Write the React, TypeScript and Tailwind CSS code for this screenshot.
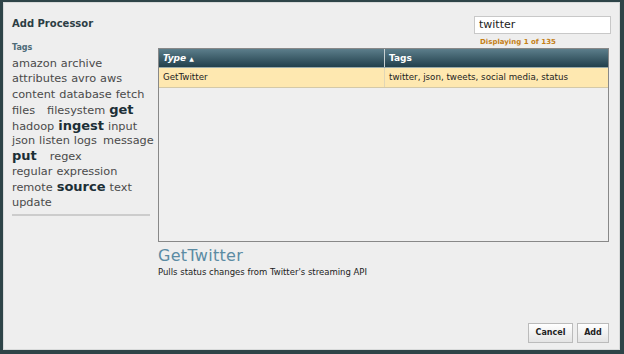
import React from 'react';

type Tag = { label: string; big?: boolean; ml?: string };

const tagLines: Tag[][] = [
    [{ label: 'amazon' }, { label: 'archive' }],
    [{ label: 'attributes' }, { label: 'avro' }, { label: 'aws' }],
    [{ label: 'content' }, { label: 'database' }, { label: 'fetch' }],
    [{ label: 'files' }, { label: 'filesystem', ml: 'ml-[8px]' }, { label: 'get', big: true }],
    [{ label: 'hadoop' }, { label: 'ingest', big: true }, { label: 'input' }],
    [{ label: 'json' }, { label: 'listen' }, { label: 'logs' }, { label: 'message', ml: 'ml-[2px]' }],
    [{ label: 'put', big: true }, { label: 'regex', ml: 'ml-[9px]' }],
    [{ label: 'regular' }, { label: 'expression' }],
    [{ label: 'remote' }, { label: 'source', big: true }, { label: 'text' }],
    [{ label: 'update' }],
];

export default function App() {
    return (
        <div
            className="w-[624px] h-[354px] bg-[#2e4448] p-[2px_4px_4px_3px] overflow-hidden"
            style={{ fontFamily: '"DejaVu Sans", Verdana, sans-serif' }}
        >
            <div className="w-full h-full bg-[#eeeeee] flex flex-col relative border border-[#d8dada]">
                {/* Header row */}
                <div className="flex h-[46px]">
                    <div className="w-[154px] pl-[8px] pt-[14px]">
                        <div className="text-[10px] font-bold text-[#2b3d44] leading-[14px]">Add Processor</div>
                    </div>
                    <div className="flex-1" />
                    <div className="w-[145px] pt-[13px] pr-[8px]">
                        <div className="h-[18px] bg-white border border-[#c8c8c8] px-[4px] text-[11px] leading-[16px] text-[#222]">
                            twitter
                        </div>
                        <div className="text-[7px] font-bold text-[#c57f16] mt-[3px] pl-[6px] leading-[10px]">Displaying 1 of 135</div>
                    </div>
                </div>

                <div className="flex flex-1">
                    {/* Tag cloud */}
                    <div className="w-[154px] pl-[8px] -mt-[6px]">
                        <div className="text-[8px] font-bold text-[#4d6b78] leading-[10px] mb-[3px]">Tags</div>
                        <div className="w-[140px] text-[#4a4a4a]">
                            {tagLines.map((line, i) => (
                                <div key={i} className="flex items-baseline gap-x-[4px] h-[15.4px] leading-[15px] whitespace-nowrap">
                                    {line.map((t) =>
                                        t.big ? (
                                            <span key={t.label} className={`text-[13px] font-bold text-[#1c2f36] ${t.ml || ''}`}>{t.label}</span>
                                        ) : (
                                            <span key={t.label} className={`text-[11.3px] ${t.ml || ''}`}>{t.label}</span>
                                        )
                                    )}
                                </div>
                            ))}
                        </div>
                        <div className="w-[138px] h-[2px] bg-[#cccccc] mt-[4px]" />
                    </div>

                    {/* Table and details */}
                    <div className="flex-1 pr-[10px] flex flex-col">
                        <div className="h-[194px] border border-[#888] bg-[#efefef] -mt-[1px]">
                            <div className="flex h-[19px] bg-gradient-to-b from-[#5c7e8b] to-[#22404c] text-white text-[9px] font-bold border-b border-[#9aa]">
                                <div className="w-[226px] pl-[4px] leading-[19px] italic border-r border-[#c8d0d2]">
                                    Type <span className="text-[6px] not-italic align-middle">▲</span>
                                </div>
                                <div className="flex-1 pl-[4px] leading-[19px]">Tags</div>
                            </div>
                            <div className="flex h-[20px] bg-[#fee8b0] text-[8.7px] text-[#222] border-b border-[#d4c9a8]">
                                <div className="w-[226px] pl-[4px] leading-[19px] border-r border-[#e0d6b6]">GetTwitter</div>
                                <div className="flex-1 pl-[4px] leading-[19px]">twitter, json, tweets, social media, status</div>
                            </div>
                        </div>
                        <div className="text-[16px] text-[#5b8ba3] mt-[4px] leading-[20px] tracking-[0.3px]">GetTwitter</div>
                        <div className="text-[8.5px] text-[#222] mt-[1px] leading-[10px]">Pulls status changes from Twitter's streaming API</div>
                        <div className="flex-1" />
                        <div className="flex justify-end gap-[4px] mb-[6px]">
                            <button className="h-[20px] w-[45px] bg-gradient-to-b from-white to-[#e4e4e4] border border-[#bbb] text-[8px] font-bold text-[#222]">
                                Cancel
                            </button>
                            <button className="h-[20px] w-[32px] bg-gradient-to-b from-white to-[#e4e4e4] border border-[#bbb] text-[8px] font-bold text-[#222]">
                                Add
                            </button>
                        </div>
                    </div>
                </div>
            </div>
        </div>
    );
}
